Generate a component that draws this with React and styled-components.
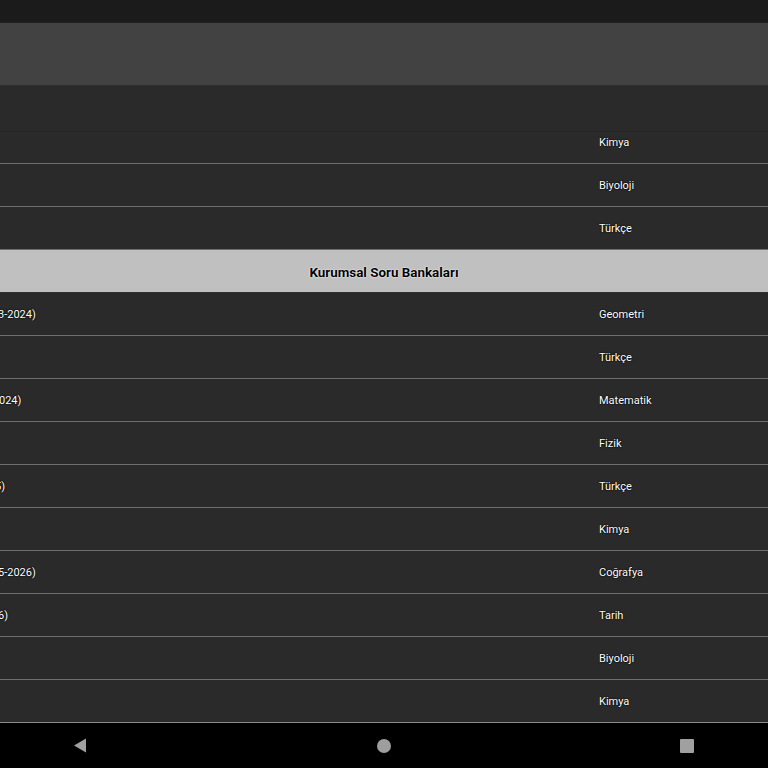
import React from "react";
import styled, { createGlobalStyle } from "styled-components";

const Global = createGlobalStyle`
  html, body { margin: 0; padding: 0; background: #2a2a2a; }
  body { font-family: Roboto, "Noto Sans", "Liberation Sans", sans-serif; }
  #root { height: 768px; }
`;

const Screen = styled.div`
  height: 768px;
  width: 768px;
  display: flex;
  flex-direction: column;
  overflow: hidden;
  background: #2a2a2a;
`;

const StatusBar = styled.div`
  height: 22px;
  flex: none;
  background: #1b1b1b;
  border-bottom: 1px solid #222;
`;

const Toolbar = styled.div`
  height: 62px;
  flex: none;
  background: #424242;
`;

const TableHead = styled.div`
  flex: none;
  background: #2a2a2a;
  border-top: 1px solid #2f2f2f;
  border-bottom: 1px solid #262626;
  box-sizing: border-box;
  height: 47px;
`;

const Scroller = styled.div`
  flex: 1;
  overflow: hidden;
`;

const List = styled.div`
  margin-top: -11px;
  display: flex;
  flex-direction: column;
`;

const Row = styled.div`
  height: 42px;
  display: grid;
  grid-template-columns: 599px 1fr;
  align-items: center;
  border-bottom: 1px solid ${(p) => (p.$last ? "#8a8a8a" : "#6e6e6e")};
  background: #2a2a2a;
`;

const Cell = styled.div`
  color: #ffffff;
  font-size: 11px;
  line-height: 14px;
  padding-top: 2px;
  white-space: nowrap;
  overflow: hidden;
  text-shadow: 0 0 2px #000, 0 0 1px #000;
  text-indent: ${(p) => p.$indent || 0}px;
`;

const Section = styled.div`
  height: 42px;
  display: flex;
  align-items: center;
  justify-content: center;
  padding-top: 2px;
  box-sizing: border-box;
  background: #c0c0c0;
  border-bottom: 1px solid #2f2f2f;
  height: 43px;
  color: #000;
  font-size: 13.4px;
  font-weight: 700;
  text-shadow: 0 0 2px #fff, 0 0 1px #fff;
`;

const NavBar = styled.div`
  height: 45px;
  flex: none;
  background: #000;
  display: grid;
  grid-template-columns: 1fr 1fr 1fr;
  align-items: center;
  justify-items: center;
`;

const NavSlot = styled.div`
  display: flex;
  align-items: center;
  justify-content: center;
  margin-left: ${(p) => p.$shift || 0}px;
`;

const Dot = styled.div`
  width: 14px;
  height: 14px;
  border-radius: 50%;
  background: #9e9e9e;
`;

const Square = styled.div`
  width: 14px;
  height: 14px;
  background: #a0a0a0;
  border-radius: 1px;
`;

const rowsTop = [
  { name: "", sub: "Kimya" },
  { name: "", sub: "Biyoloji" },
  { name: "", sub: "Türkçe" },
];

const rowsBottom = [
  { name: "3-2024)", indent: -2, sub: "Geometri" },
  { name: "", sub: "Türkçe" },
  { name: "024)", indent: -1, sub: "Matematik" },
  { name: "", sub: "Fizik" },
  { name: "5)", indent: -5, sub: "Türkçe" },
  { name: "", sub: "Kimya" },
  { name: "5-2026)", indent: -2, sub: "Coğrafya" },
  { name: "6)", indent: -2, sub: "Tarih" },
  { name: "", sub: "Biyoloji" },
  { name: "", sub: "Kimya" },
];

export default function App() {
  return (
    <>
      <Global />
      <Screen>
        <StatusBar />
        <Toolbar />
        <TableHead />
        <Scroller>
          <List>
            {rowsTop.map((r, i) => (
              <Row key={"t" + i}>
                <Cell $indent={r.indent}>{r.name}</Cell>
                <Cell>{r.sub}</Cell>
              </Row>
            ))}
            <Section>Kurumsal Soru Bankaları</Section>
            {rowsBottom.map((r, i) => (
              <Row key={"b" + i} $last={i === rowsBottom.length - 1}>
                <Cell $indent={r.indent}>{r.name}</Cell>
                <Cell>{r.sub}</Cell>
              </Row>
            ))}
          </List>
        </Scroller>
        <NavBar>
          <NavSlot $shift={-97}>
            <svg width="14" height="15" viewBox="0 0 14 15">
              <path d="M13 0.5 L13 14.5 L1 7.5 Z" fill="#a0a0a0" />
            </svg>
          </NavSlot>
          <NavSlot>
            <Dot />
          </NavSlot>
          <NavSlot $shift={94}>
            <Square />
          </NavSlot>
        </NavBar>
      </Screen>
    </>
  );
}
